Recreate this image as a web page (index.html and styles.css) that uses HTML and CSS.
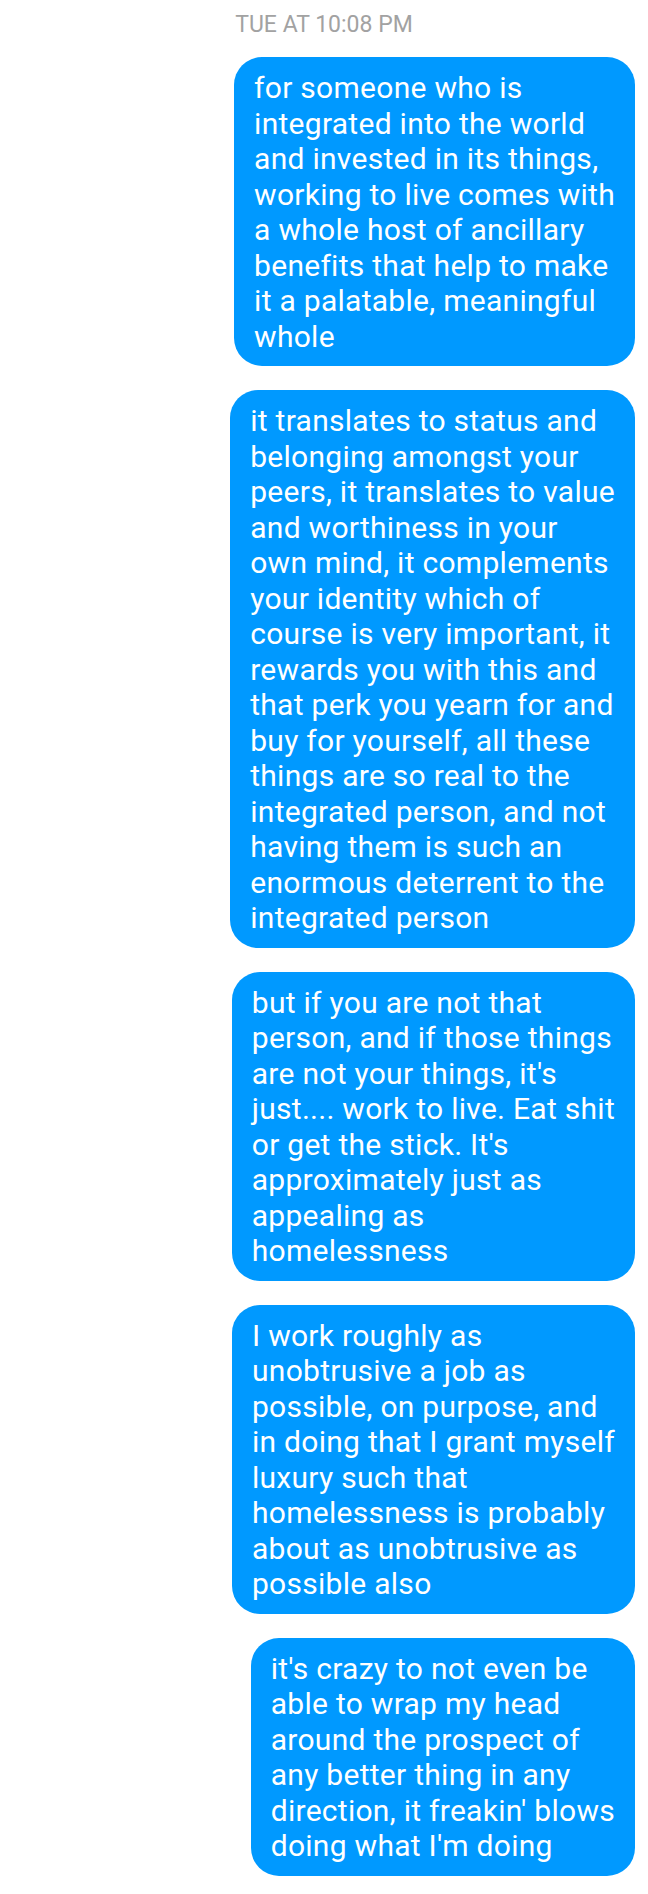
FILE: index.html
```html
<!DOCTYPE html>
<html>
<head>
<meta charset="utf-8">
<link rel="stylesheet" href="styles.css">
</head>
<body>
<div class="thread">
  <div class="stamp">TUE AT 10:08 PM</div>
  <div class="bubble">for someone who is<br>integrated into the world<br>and invested in its things,<br>working to live comes with<br>a whole host of ancillary<br>benefits that help to make<br>it a palatable, meaningful<br>whole</div>
  <div class="bubble">it translates to status and<br>belonging amongst your<br>peers, it translates to value<br>and worthiness in your<br>own mind, it complements<br>your identity which of<br>course is very important, it<br>rewards you with this and<br>that perk you yearn for and<br>buy for yourself, all these<br>things are so real to the<br>integrated person, and not<br>having them is such an<br>enormous deterrent to the<br>integrated person</div>
  <div class="bubble">but if you are not that<br>person, and if those things<br>are not your things, it's<br>just.... work to live. Eat shit<br>or get the stick. It's<br>approximately just as<br>appealing as<br>homelessness</div>
  <div class="bubble">I work roughly as<br>unobtrusive a job as<br>possible, on purpose, and<br>in doing that I grant myself<br>luxury such that<br>homelessness is probably<br>about as unobtrusive as<br>possible also</div>
  <div class="bubble">it's crazy to not even be<br>able to wrap my head<br>around the prospect of<br>any better thing in any<br>direction, it freakin' blows<br>doing what I'm doing</div>
</div>
</body>
</html>
```
FILE: styles.css
```css
html, body {
  margin: 0;
  padding: 0;
  background: #ffffff;
}
.thread {
  display: flex;
  flex-direction: column;
  align-items: flex-end;
  gap: 24px;
  padding: 11px 13px 18px 13px;
  font-family: Roboto, "Liberation Sans", sans-serif;
}
.stamp {
  align-self: center;
  font-size: 23px;
  line-height: 27px;
  color: #a2a2a2;
  margin-bottom: -5px;
}
.bubble {
  background: #0099ff;
  color: #ffffff;
  font-size: 30px;
  letter-spacing: 0.28px;
  line-height: 35.5px;
  padding: 13px 20px 12px 20px;
  border-radius: 28px;
  white-space: nowrap;
}
```
